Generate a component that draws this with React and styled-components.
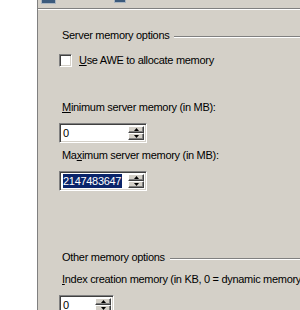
import React from 'react';
import styled, { createGlobalStyle } from 'styled-components';

const GlobalStyle = createGlobalStyle`
  html, body {
    margin: 0;
    padding: 0;
    background: #d4d0c8;
  }
  body {
    font-family: Tahoma, "Liberation Sans", "DejaVu Sans", sans-serif;
    font-size: 11px;
    letter-spacing: -0.3px;
    color: #000;
  }
`;

const Window = styled.div`
  display: flex;
  width: 300px;
  height: 310px;
  overflow: hidden;
`;

const Sidebar = styled.div`
  width: 37px;
  flex: none;
  background: #fff;
  border-right: 1px solid #808080;
`;

const Panel = styled.div`
  flex: 1;
  display: flex;
  flex-direction: column;
  background: #d4d0c8;
  min-width: 0;
`;

const TabStrip = styled.div`
  height: 8px;
  flex: none;
  display: flex;
  align-items: flex-start;
  border-bottom: 1px solid #808080;
  box-shadow: 0 1px 0 #fff;
`;

const TabIcon = styled.span`
  display: block;
  width: ${(p) => p.$w}px;
  height: ${(p) => p.$h}px;
  margin-left: ${(p) => p.$left}px;
  background: #3b5a7c;
  box-shadow: 0 0 0 1px #a9b4c0;
`;

const Content = styled.div`
  display: flex;
  flex-direction: column;
  padding-left: 21px;
  white-space: nowrap;
`;

const GroupHeader = styled.div`
  display: flex;
  align-items: center;
  gap: 5px;
  height: 13px;
  line-height: 13px;
  margin-top: ${(p) => p.$top}px;
  padding-left: 3px;
`;

const Etched = styled.div`
  flex: 1;
  height: 1px;
  background: #808080;
  border-bottom: 1px solid #fff;
  margin-top: 2px;
`;

const CheckRow = styled.label`
  display: flex;
  align-items: center;
  gap: 7px;
  margin-top: ${(p) => p.$top}px;
  height: 13px;
  line-height: 13px;
`;

const CheckBox = styled.span`
  display: block;
  box-sizing: border-box;
  width: 13px;
  height: 13px;
  background: #fff;
  border-top: 1px solid #808080;
  border-left: 1px solid #808080;
  border-right: 1px solid #fff;
  border-bottom: 1px solid #fff;
  box-shadow: inset 1px 1px 0 #404040, inset -1px -1px 0 #d4d0c8;
`;

const Label = styled.div`
  height: 13px;
  line-height: 13px;
  margin-top: ${(p) => p.$top}px;
  padding-left: 3px;
`;

const Key = styled.span`
  text-decoration: underline;
`;

const SpinBox = styled.div`
  display: flex;
  box-sizing: border-box;
  width: ${(p) => p.$w}px;
  height: 20px;
  margin-top: ${(p) => p.$top}px;
  background: #fff;
  border-top: 1px solid #808080;
  border-left: 1px solid #808080;
  border-right: 1px solid #fff;
  border-bottom: 1px solid #fff;
  box-shadow: inset 1px 1px 0 #404040, inset -1px -1px 0 #d4d0c8;
  padding: 2px;
`;

const SpinValue = styled.div`
  flex: 1;
  display: flex;
  align-items: center;
  line-height: 14px;
  padding-left: 1px;
`;

const Selected = styled.span`
  background: #0a246a;
  color: #fff;
  padding-right: 1px;
`;

const SpinButtons = styled.div`
  display: flex;
  flex-direction: column;
  width: 16px;
  flex: none;
`;

const SpinButton = styled.div`
  flex: 1;
  display: flex;
  align-items: center;
  justify-content: center;
  background: #d4d0c8;
  box-sizing: border-box;
  border-top: 1px solid #fff;
  border-left: 1px solid #fff;
  border-right: 1px solid #404040;
  border-bottom: 1px solid #404040;
  box-shadow: inset -1px -1px 0 #808080;
`;

const Arrow = ({ down }) => (
  <svg width="5" height="3" viewBox="0 0 5 3">
    {down ? <path d="M0 0h5L2.5 3z" fill="#000" /> : <path d="M0 3h5L2.5 0z" fill="#000" />}
  </svg>
);

const Spinner = ({ value, width, top, selected }) => (
  <SpinBox $w={width} $top={top}>
    <SpinValue>{selected ? <Selected>{value}</Selected> : value}</SpinValue>
    <SpinButtons>
      <SpinButton>
        <Arrow />
      </SpinButton>
      <SpinButton>
        <Arrow down />
      </SpinButton>
    </SpinButtons>
  </SpinBox>
);

export default function App() {
  return (
    <>
      <GlobalStyle />
      <Window>
        <Sidebar />
        <Panel>
          <TabStrip>
            <TabIcon $left={4} $w={13} $h={3} />
            <TabIcon $left={60} $w={10} $h={2} />
          </TabStrip>
          <Content>
            <GroupHeader $top={20}>
              Server memory options
              <Etched />
            </GroupHeader>
            <CheckRow $top={12}>
              <CheckBox />
              <span>
                <Key>U</Key>se AWE to allocate memory
              </span>
            </CheckRow>
            <Label $top={34}>
              <Key>M</Key>inimum server memory (in MB):
            </Label>
            <Spinner value="0" width={88} top={9} />
            <Label $top={6}>
              Ma<Key>x</Key>imum server memory (in MB):
            </Label>
            <Spinner value="2147483647" width={88} top={9} selected />
            <GroupHeader $top={60}>
              Other memory options
              <Etched />
            </GroupHeader>
            <Label $top={9}>
              <Key>I</Key>ndex creation memory (in KB, 0 = dynamic memory)
            </Label>
            <Spinner value="0" width={55} top={9} />
          </Content>
        </Panel>
      </Window>
    </>
  );
}
